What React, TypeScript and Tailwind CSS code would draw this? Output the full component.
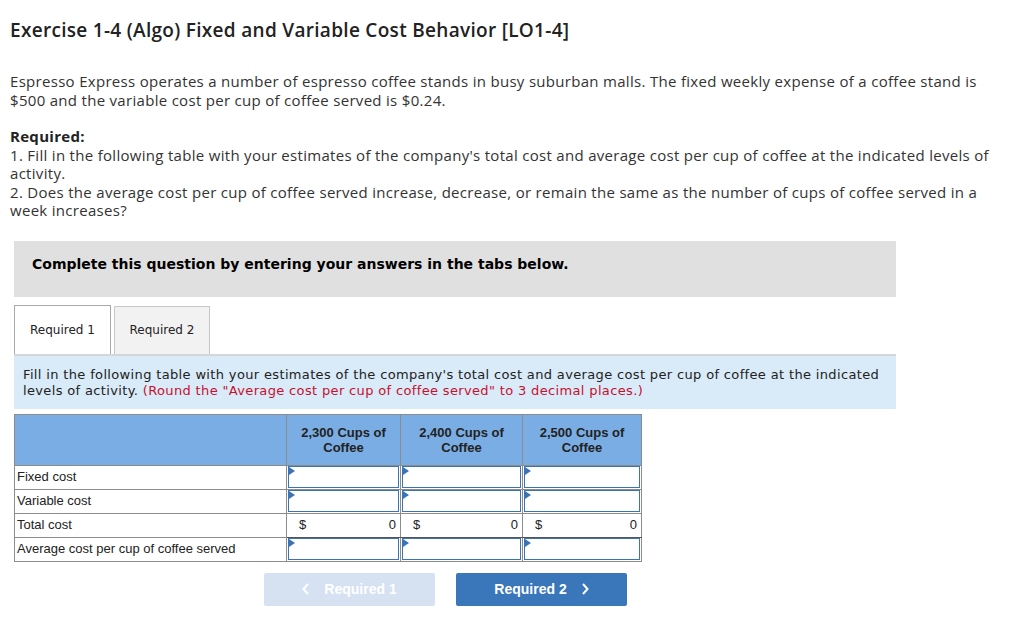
import React from 'react';

const cols = ['2,300', '2,400', '2,500'];

function InputCell() {
  return (
    <td className="border border-[#8c8c8c] p-0 h-6">
      <div className="relative h-[22px] mx-px border border-[#3b74b5] bg-white">
        <span className="absolute left-0 top-0 w-0 h-0 border-y-[4px] border-y-transparent border-l-[6px] border-l-[#3b74b5]" />
      </div>
    </td>
  );
}

export default function App() {
  return (
    <div className="bg-white w-[1024px] h-[623px] overflow-hidden text-[#333]">
      <h1 className="px-[10px] pt-[18px] text-[19px] leading-[24px] font-semibold tracking-[0.3px] text-[#222] font-['Open_Sans',sans-serif]">
        Exercise 1-4 (Algo) Fixed and Variable Cost Behavior [LO1-4]
      </h1>

      <div className="pl-[10px] pr-[30px] pt-[30px] text-[15px] leading-[18.5px] tracking-[0.3px] font-['Open_Sans',sans-serif] text-[#333]">
        <p>
          Espresso Express operates a number of espresso coffee stands in busy suburban malls. The fixed weekly expense of a coffee stand is $500 and the variable cost per cup of coffee served is $0.24.
        </p>
        <p className="mt-[18px] font-bold text-[#222]">Required:</p>
        <p>
          1. Fill in the following table with your estimates of the company's total cost and average cost per cup of coffee at the indicated levels of activity.
        </p>
        <p>
          2. Does the average cost per cup of coffee served increase, decrease, or remain the same as the number of cups of coffee served in a week increases?
        </p>
      </div>

      <div className="ml-[14px] w-[882px] mt-[21px] h-[56px] bg-[#e0e0e0] pt-[14px] px-[18px] font-['DejaVu_Sans',sans-serif] text-[14px] leading-[18px] font-bold text-black">
        Complete this question by entering your answers in the tabs below.
      </div>

      <div className="ml-[14px] w-[882px] mt-[8px] flex gap-[3px] items-end">
        <div className="w-[97px] h-[49px] border border-b-0 border-[#a8a8a8] bg-white flex items-center justify-center font-['DejaVu_Sans',sans-serif] text-[12px] text-[#222]">
          Required 1
        </div>
        <div className="w-[96px] h-[48px] border border-b-0 border-[#c8c8c8] bg-[#f2f2f2] flex items-center justify-center font-['DejaVu_Sans',sans-serif] text-[12px] text-[#222]">
          Required 2
        </div>
      </div>

      <div className="ml-[14px] w-[882px] border-t-2 border-[#d6d6d6] bg-[#d9eaf8] pl-[9px] pr-[14px] pt-[11px] pb-[10px] font-['DejaVu_Sans',sans-serif] text-[13px] leading-[16px] tracking-[0.35px] text-[#222]">
        Fill in the following table with your estimates of the company's total cost and average cost per cup of coffee at the indicated levels of activity.{' '}
        <span className="text-[#c8102e]">(Round the "Average cost per cup of coffee served" to 3 decimal places.)</span>
      </div>

      <table className="ml-[14px] mt-[5px] border-collapse font-['Liberation_Sans',sans-serif] text-[13px] text-[#222]">
        <thead>
          <tr className="bg-[#7aade3] h-[51px]">
            <th className="w-[272px] border border-[#8c8c8c]" />
            {cols.map((c, i) => (
              <th
                key={c}
                className={`border border-[#8c8c8c] font-bold leading-[15px] align-middle ${i === 0 ? 'w-[114px]' : i === 1 ? 'w-[122px]' : 'w-[119px]'}`}
              >
                {c} Cups of
                <br />
                Coffee
              </th>
            ))}
          </tr>
        </thead>
        <tbody>
          <tr>
            <td className="border border-[#8c8c8c] px-[2px] h-6">Fixed cost</td>
            <InputCell />
            <InputCell />
            <InputCell />
          </tr>
          <tr>
            <td className="border border-[#8c8c8c] px-[2px] h-6">Variable cost</td>
            <InputCell />
            <InputCell />
            <InputCell />
          </tr>
          <tr>
            <td className="border border-[#8c8c8c] px-[2px] h-6">Total cost</td>
            {cols.map((c) => (
              <td key={c} className="border border-[#8c8c8c] border-t-black border-b-[#555] p-0 h-6">
                <div className="flex justify-between pl-[12px] pr-[4px]">
                  <span>$</span>
                  <span>0</span>
                </div>
              </td>
            ))}
          </tr>
          <tr>
            <td className="border border-[#8c8c8c] px-[2px] h-6">Average cost per cup of coffee served</td>
            <InputCell />
            <InputCell />
            <InputCell />
          </tr>
        </tbody>
      </table>

      <div className="flex gap-[21px] ml-[264px] mt-[11px] font-['Liberation_Sans',sans-serif] text-[14px] font-bold">
        <button className="w-[171px] h-[33px] rounded-[2px] bg-[#d6e2f1] text-white flex items-center justify-center gap-[14px]">
          <svg width="8" height="12" viewBox="0 0 8 12" fill="none" stroke="white" strokeWidth="2">
            <path d="M6 1 L1.5 6 L6 11" />
          </svg>
          Required 1
        </button>
        <button className="w-[171px] h-[33px] rounded-[2px] bg-[#3a76ba] text-white flex items-center justify-center gap-[14px]">
          Required 2
          <svg width="8" height="12" viewBox="0 0 8 12" fill="none" stroke="white" strokeWidth="2">
            <path d="M2 1 L6.5 6 L2 11" />
          </svg>
        </button>
      </div>
    </div>
  );
}
